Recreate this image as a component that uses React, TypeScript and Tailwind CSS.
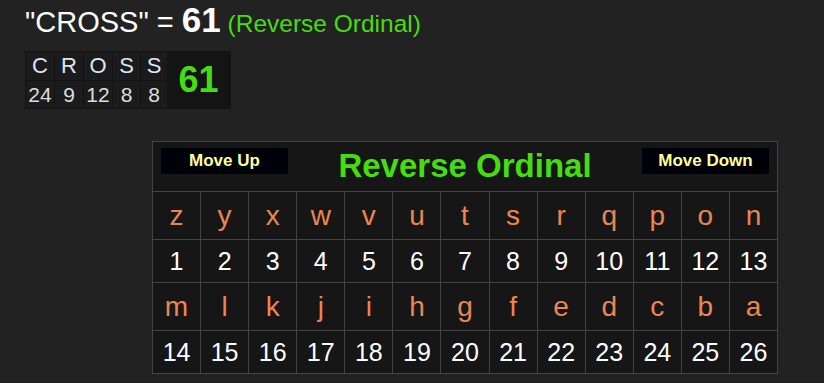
import React from 'react';

const word = 'CROSS';
const cipherName = 'Reverse Ordinal';

// reverse ordinal: a = 26 ... z = 1
const valueOf = (ch: string) => 27 - (ch.toLowerCase().charCodeAt(0) - 96);

const letters = 'zyxwvutsrqponmlkjihgfedcba'.split('');

const chartRows: { kind: 'letter' | 'number'; items: string[] }[] = [
  { kind: 'letter', items: letters.slice(0, 13) },
  { kind: 'number', items: letters.slice(0, 13).map((l) => String(valueOf(l))) },
  { kind: 'letter', items: letters.slice(13) },
  { kind: 'number', items: letters.slice(13).map((l) => String(valueOf(l))) },
];

const colWidths = ['w-[28px]', 'w-[28px]', 'w-[28px]', 'w-[27px]', 'w-[26px]'];

const Breakdown: React.FC<{ text: string; total: number }> = ({ text, total }) => {
  const chars = text.split('');
  return (
    <div className="flex bg-[#141414] p-px w-[206px] h-[58px]">
      <div className="flex gap-px">
        {chars.map((c, i) => (
          <div key={i} className={`flex flex-col gap-px ${colWidths[i]}`}>
            <div className="h-[29px] bg-[#1b1b1b] flex items-center justify-center text-[22px] leading-none text-[#dbe7f5]">
              {c}
            </div>
            <div className="h-[27px] bg-[#1b1b1b] flex items-center justify-center text-[21px] leading-none text-[#dddddd]">
              {valueOf(c)}
            </div>
          </div>
        ))}
      </div>
      <div className="flex-1 flex items-center justify-center text-[36px] font-bold leading-none text-[#44dd11]">
        {total}
      </div>
    </div>
  );
};

const HeaderButton: React.FC<{ label: string }> = ({ label }) => (
  <button className="w-[127px] h-[26px] bg-[#000008] text-[#ffff99] text-[17px] font-bold leading-[26px] text-center">
    {label}
  </button>
);

export default function App() {
  const total = word.split('').reduce((s, c) => s + valueOf(c), 0);

  return (
    <div
      className="min-h-screen w-full bg-[#222222] text-white"
      style={{ fontFamily: '"Liberation Sans", Arial, sans-serif' }}
    >
      <div className="pl-[25px] pt-[4px]">
        <div className="h-[40px] leading-[32px] whitespace-nowrap">
          <span className="text-[29px]">"{word}" = </span>
          <span className="text-[35px] font-bold">{total}</span>
          <span className="text-[24.5px] text-[#44dd11]"> ({cipherName})</span>
        </div>
        <div className="mt-[7px]">
          <Breakdown text={word} total={total} />
        </div>
      </div>

      <div className="ml-[152px] mt-[32px] w-[626px] border border-[#444444] bg-[#161616]">
        <div className="h-[50px] flex items-start justify-between px-[8px] pt-[6px] border-b border-[#444444]">
          <HeaderButton label="Move Up" />
          <div className="text-[33px] font-bold leading-[36px] text-[#44dd11]">{cipherName}</div>
          <HeaderButton label="Move Down" />
        </div>
        <div className="grid grid-cols-13 gap-px bg-[#444444]">
          {chartRows.map((row, r) =>
            row.items.map((item, i) => (
              <div
                key={`${r}-${i}`}
                className={
                  row.kind === 'letter'
                    ? 'h-[47px] bg-[#161616] flex items-center justify-center text-[28px] leading-none text-[#ec8650]'
                    : 'h-[42px] bg-[#161616] flex items-center justify-center text-[25px] leading-none text-white'
                }
              >
                {item}
              </div>
            ))
          )}
        </div>
      </div>
    </div>
  );
}
